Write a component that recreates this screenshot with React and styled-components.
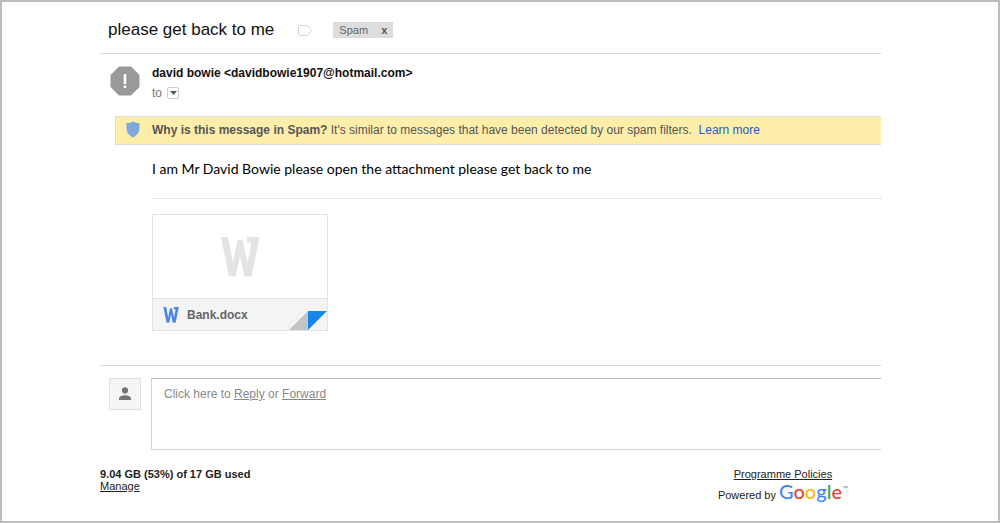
import React from "react";
import styled, { createGlobalStyle } from "styled-components";

const App = () => {
  return (
    <>
      <GlobalStyle />
      <Frame>
        <SubjectBar>
          <h1>please get back to me</h1>
          <TagIcon />
          <Label>
            <span>Spam</span>
            <button type="button" aria-label="Remove label Spam">
              x
            </button>
          </Label>
        </SubjectBar>
        <main>
          <Sender>
            <SpamIcon />
            <div>
              <h2>david bowie &lt;davidbowie1907@hotmail.com&gt;</h2>
              <Recipient>
                to
                <button type="button" aria-label="Show details">
                  <svg width="7" height="4" viewBox="0 0 7 4">
                    <path d="M0 0h7L3.5 4z" fill="#555" />
                  </svg>
                </button>
              </Recipient>
            </div>
          </Sender>
          <Banner>
            <ShieldIcon />
            <p>
              <strong>Why is this message in Spam?</strong> It's similar to
              messages that have been detected by our spam filters.&nbsp;{" "}
              <a href="#learn">Learn more</a>
            </p>
          </Banner>
          <Body>I am Mr David Bowie please open the attachment please get back to me</Body>
          <Attachment href="#bank">
            <Preview>
              <WordIcon size={40} color="#e4e4e4" />
            </Preview>
            <FileBar>
              <WordIcon size={16} color="#4a86e8" />
              <span>Bank.docx</span>
              <Corner />
            </FileBar>
          </Attachment>
        </main>
        <Reply>
          <Avatar>
            <svg width="14" height="14" viewBox="0 0 14 14" fill="#757575">
              <circle cx="7" cy="3.4" r="3.1" />
              <path d="M1 13v-1.6C1 9.200 4.800 8.200 7 8.200s6 1 6 3.200V13z" />
            </svg>
          </Avatar>
          <ReplyBox>
            Click here to <a href="#reply">Reply</a> or{" "}
            <a href="#forward">Forward</a>
          </ReplyBox>
        </Reply>
        <Footer>
          <div>
            <strong>9.04 GB (53%) of 17 GB used</strong>
            <a href="#manage">Manage</a>
          </div>
          <Powered>
            <a href="#policies">Programme Policies</a>
            <p>
              Powered by
              <Wordmark>
                <Letter $color="#4285f4">G</Letter>
                <Letter $color="#ea4335">o</Letter>
                <Letter $color="#fbbc05">o</Letter>
                <Letter $color="#4285f4">g</Letter>
                <Letter $color="#34a853">l</Letter>
                <Letter $color="#ea4335">e</Letter>
              </Wordmark>
              <sup>™</sup>
            </p>
          </Powered>
        </Footer>
      </Frame>
    </>
  );
};

const TagIcon = () => (
  <svg width="14" height="11" viewBox="0 0 14 11" fill="none" stroke="#d4d4d4">
    <path d="M1.500 .5h8.300L13.300 5.500l-3.500 5H1.500a1 1 0 0 1-1-1v-8a1 1 0 0 1 1-1z" />
  </svg>
);

const SpamIcon = () => (
  <svg width="30" height="30" viewBox="0 0 30 30">
    <path d="M9 .5h12l8.500 8.500v12L21 29.500H9L.5 21V9z" fill="#999" />
    <path d="M13.700 8h2.600v10h-2.600zM13.700 19.500h2.600V22h-2.600z" fill="#fff" />
  </svg>
);

const ShieldIcon = () => (
  <svg width="14" height="17" viewBox="0 0 14 17">
    <path
      d="M7 .5c2 1.100 4.200 1.500 6.500 1.500v5c0 4.500-2.500 7.500-6.500 9.500C3 14.500.5 11.500.5 7V2C2.800 2 5 1.600 7 .5z"
      fill="#7fa8dc"
    />
  </svg>
);

const WordIcon = ({ size, color }) => (
  <svg width={size} height={size} viewBox="0 0 40 40" fill={color}>
    <path d="M1 0h7l5 26L17.500 3h5L27.500 26 31.500 5.500H27V0h12.500L31.500 39.500h-7L20 19l-4.500 20.500H9z" />
  </svg>
);

const Corner = () => (
  <svg width="38" height="19" viewBox="0 0 38 19">
    <path d="M0 19L19 0v19z" fill="#c4c4c4" />
    <path d="M19 0h19L19 19z" fill="#1486ee" />
  </svg>
);

const GlobalStyle = createGlobalStyle`
  * {
    box-sizing: border-box;
    margin: 0;
  }
  body {
    background: #fff;
    color: #222;
    font-family: "Liberation Sans", Arial, sans-serif;
    font-size: 12px;
    line-height: 16px;
  }
  svg {
    display: block;
    flex: none;
  }
  button {
    padding: 0;
    font: inherit;
    color: inherit;
    cursor: pointer;
  }
`;

const Frame = styled.div`
  min-height: 100vh;
  padding: 0 117px 16px 98px;
  border: 2px solid #bdbdbd;
`;

const SubjectBar = styled.header`
  display: flex;
  align-items: center;
  height: 52px;
  padding: 5px 8px 0;
  border-bottom: 1px solid #d8d8d8;
  h1 {
    margin-right: 24px;
    color: #111;
    font-size: 17px;
    font-weight: 400;
    line-height: 24px;
  }
`;

const Label = styled.div`
  display: flex;
  align-items: center;
  justify-content: space-between;
  width: 60px;
  height: 16px;
  margin-left: 21px;
  padding: 0 6px;
  background: #ddd;
  color: #666;
  font-size: 11px;
  button {
    border: 0;
    background: none;
    color: #555;
    font-weight: 700;
  }
`;

const Sender = styled.div`
  display: flex;
  gap: 12px;
  padding: 12px 10px 0;
  h2 {
    color: #111;
    font-size: 12px;
    line-height: 14px;
  }
`;

const Recipient = styled.p`
  display: flex;
  align-items: center;
  gap: 5px;
  height: 26px;
  color: #777;
  button {
    display: grid;
    place-items: center;
    width: 12px;
    height: 12px;
    border: 1px solid #ccc;
    border-radius: 2px;
    background: #fff;
  }
`;

const Banner = styled.section`
  display: flex;
  align-items: center;
  gap: 12px;
  min-height: 29px;
  margin: 10px 0 0 15px;
  padding: 0 0 2px 10px;
  border: 1px solid #dcdcdc;
  border-right: 0;
  background: #fdeeaa;
  color: #555;
  a {
    color: #2a55d4;
    text-decoration: none;
  }
`;

const Body = styled.p`
  margin-left: 52px;
  padding: 14px 0 19px;
  border-bottom: 1px dotted #ccc;
  color: #000;
  font-family: Lato, sans-serif;
  font-size: 14px;
  line-height: 20px;
`;

const Attachment = styled.a`
  display: block;
  width: 176px;
  margin: 15px 0 0 52px;
  border: 1px solid #e2e2e2;
  color: #666;
  text-decoration: none;
`;

const Preview = styled.div`
  display: grid;
  place-items: center;
  height: 83px;
`;

const FileBar = styled.div`
  display: flex;
  align-items: center;
  gap: 8px;
  height: 32px;
  padding-left: 10px;
  border-top: 1px solid #e2e2e2;
  background: #f4f4f4;
  font-weight: 700;
  svg:last-child {
    align-self: flex-end;
    margin-left: auto;
  }
`;

const Reply = styled.section`
  display: flex;
  gap: 10px;
  margin-top: 34px;
  padding: 12px 0 0 9px;
  border-top: 1px solid #d8d8d8;
`;

const Avatar = styled.div`
  display: grid;
  place-items: center;
  width: 32px;
  height: 32px;
  border: 1px solid #e0e0e0;
  background: #f5f5f5;
`;

const ReplyBox = styled.div`
  flex: 1;
  min-height: 72px;
  padding: 7px 12px;
  border: 1px solid #d4d4d4;
  border-top-color: #bbb;
  border-right: 0;
  color: #888;
  a {
    color: inherit;
  }
`;

const Footer = styled.footer`
  display: flex;
  justify-content: space-between;
  padding: 18px 33px 0 0;
  font-size: 11px;
  line-height: 12px;
  a {
    display: block;
    color: #222;
  }
`;

const Powered = styled.div`
  display: flex;
  flex-direction: column;
  align-items: center;
  p {
    display: flex;
    align-items: baseline;
  }
  sup {
    align-self: flex-start;
    padding-top: 2px;
    color: #777;
    font-size: 6px;
  }
`;

const Wordmark = styled.span`
  margin-left: 3px;
  font-family: Lato, sans-serif;
  font-size: 20px;
  font-weight: 500;
  line-height: 22px;
`;

const Letter = styled.span`
  color: ${({ $color }) => $color};
`;

export default App;
